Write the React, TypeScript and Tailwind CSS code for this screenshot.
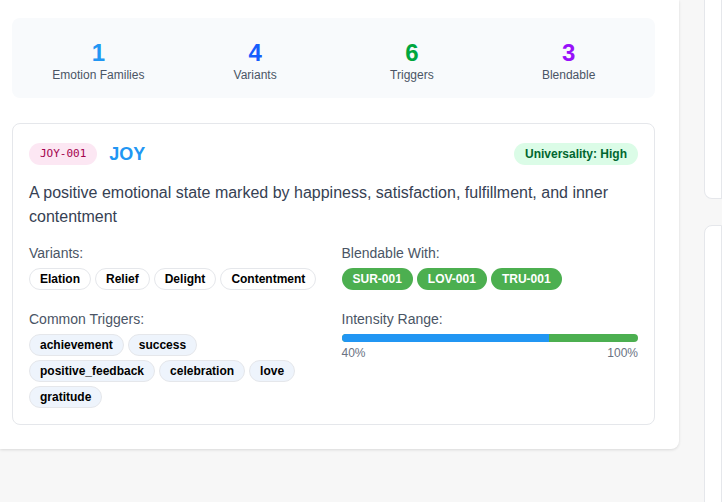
import React from 'react';

const stats = [
  { value: 1, label: 'Emotion Families', color: 'text-[#2196f3]' },
  { value: 4, label: 'Variants', color: 'text-blue-600' },
  { value: 6, label: 'Triggers', color: 'text-green-600' },
  { value: 3, label: 'Blendable', color: 'text-purple-600' },
];

const variants = ['Elation', 'Relief', 'Delight', 'Contentment'];
const triggers = ['achievement', 'success', 'positive_feedback', 'celebration', 'love', 'gratitude'];
const blends = ['SUR-001', 'LOV-001', 'TRU-001'];

export default function App() {
  return (
    <div className="min-h-[502px] bg-[#f7f7f7] flex gap-[25px] overflow-hidden" style={{ fontFamily: '"Liberation Sans", Arial, sans-serif' }}>
      <div className="w-[679px] shrink-0 h-[449px] bg-white rounded-br-lg shadow-[0_1px_3px_rgba(0,0,0,0.12)] pl-3 pr-6 pt-[18px]">
        <div className="grid grid-cols-4 gap-4 bg-[#f8fafc] rounded-lg px-4 pt-[21px] h-[80px] items-start">
          {stats.map((s) => (
            <div key={s.label} className="flex flex-col items-center">
              <span className={`text-2xl font-bold leading-7 ${s.color}`}>{s.value}</span>
              <span className="text-xs text-gray-600 leading-4">{s.label}</span>
            </div>
          ))}
        </div>

        <div className="mt-[25px] border border-gray-200 rounded-lg px-4 pt-4 pb-4">
          <div className="flex items-center justify-between">
            <div className="flex items-center gap-3">
              <span className="bg-pink-100 text-pink-800 rounded-full px-[11px] h-[22px] flex items-center text-[11px]" style={{ fontFamily: '"DejaVu Sans Mono", monospace' }}>
                JOY-001
              </span>
              <span className="text-lg font-bold text-[#2196f3]">JOY</span>
            </div>
            <span className="bg-green-100 text-green-800 rounded-full px-[11px] h-[22px] flex items-center text-xs font-bold">
              Universality: High
            </span>
          </div>

          <p className="mt-[13px] text-base leading-6 text-gray-700">
            A positive emotional state marked by happiness, satisfaction, fulfillment, and inner contentment
          </p>

          <div className="grid grid-cols-2 gap-x-4 mt-[14px]">
            <div>
              <div className="text-sm text-gray-600 leading-5">Variants:</div>
              <div className="flex flex-wrap gap-1 mt-[5px]">
                {variants.map((v) => (
                  <span key={v} className="h-[22px] flex items-center px-[10px] rounded-full border border-gray-200 bg-white text-xs font-bold text-black">
                    {v}
                  </span>
                ))}
              </div>

              <div className="text-sm text-gray-600 leading-5 mt-[19px]">Common Triggers:</div>
              <div className="flex flex-wrap gap-1 mt-[5px]">
                {triggers.map((t) => (
                  <span key={t} className="h-[22px] flex items-center px-[10px] rounded-full border border-gray-200 bg-[#eef4fc] text-xs font-bold text-black">
                    {t}
                  </span>
                ))}
              </div>
            </div>

            <div>
              <div className="text-sm text-gray-600 leading-5">Blendable With:</div>
              <div className="flex flex-wrap gap-1 mt-[5px]">
                {blends.map((b) => (
                  <span key={b} className="h-[22px] flex items-center px-[11px] rounded-full bg-[#4caf50] text-xs font-bold text-white">
                    {b}
                  </span>
                ))}
              </div>

              <div className="text-sm text-gray-600 leading-5 mt-[19px]">Intensity Range:</div>
              <div className="mt-[5px] h-2 rounded-full bg-[#4caf50] overflow-hidden flex">
                <div className="h-full bg-[#2196f3] w-[70%]" />
              </div>
              <div className="flex justify-between text-xs text-gray-500 mt-[3px]">
                <span>40%</span>
                <span>100%</span>
              </div>
            </div>
          </div>
        </div>
      </div>

      <div className="flex-1 flex flex-col gap-[26px]">
        <div className="h-[199px] bg-white border border-gray-200 border-t-0 rounded-bl-lg" />
        <div className="h-[300px] bg-white border border-gray-200 rounded-tl-lg" />
      </div>
    </div>
  );
}
